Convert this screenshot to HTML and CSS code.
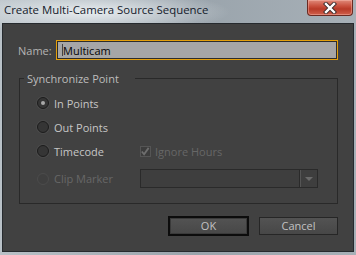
FILE: index.html
```html
<!DOCTYPE html>
<html>
<head>
<meta charset="utf-8">
<link rel="stylesheet" href="styles.css">
</head>
<body>
<div class="window">
  <div class="titlebar">
    <span class="title">Create Multi-Camera Source Sequence</span>
    <button class="close" aria-label="Close">
      <svg width="18" height="12" viewBox="0 0 18 12">
        <path d="M5 2 L13 10 M13 2 L5 10" stroke="#3a2a2a" stroke-width="4.2" stroke-linecap="square"/>
        <path d="M5 2 L13 10 M13 2 L5 10" stroke="#ffffff" stroke-width="2.4" stroke-linecap="square"/>
      </svg>
    </button>
  </div>
  <div class="content">
    <div class="name-row">
      <label class="name-label">Name:</label>
      <div class="name-input"><span class="caret"></span>Multicam</div>
    </div>
    <fieldset class="group">
      <legend>Synchronize Point</legend>
      <div class="grid">
        <div class="opt"><span class="radio checked"></span>In Points</div>
        <div></div>
        <div class="opt"><span class="radio"></span>Out Points</div>
        <div></div>
        <div class="opt"><span class="radio"></span>Timecode</div>
        <div class="opt disabled"><span class="check">
          <svg width="11" height="11" viewBox="0 0 11 11"><path d="M2 5.5 L4.5 8.5 L9.5 1.5" fill="none" stroke="#6e6e6e" stroke-width="2"/></svg>
        </span>Ignore Hours</div>
        <div class="opt disabled last"><span class="radio dis"></span>Clip Marker</div>
        <div class="select last"><span class="sel-body"></span><span class="sel-arrow"></span></div>
      </div>
    </fieldset>
    <div class="buttons">
      <button class="btn default">OK</button>
      <button class="btn">Cancel</button>
    </div>
  </div>
</div>
</body>
</html>
```
FILE: styles.css
```css
html, body {
  margin: 0;
  padding: 0;
  width: 356px;
  height: 255px;
  overflow: hidden;
  background: #a4adb4;
}
.window {
  width: 356px;
  height: 255px;
  box-sizing: border-box;
  padding: 0 2px 3px 2px;
  display: flex;
  flex-direction: column;
  background:
    radial-gradient(ellipse 140px 22px at 90px 12px, rgba(235,240,243,0.95), rgba(235,240,243,0) 100%),
    linear-gradient(90deg, #b9c1c7 0%, #9aa4ac 55%, #a7b0b7 100%);
  font-family: "Open Sans", "Noto Sans", sans-serif;
}
.titlebar {
  height: 23px;
  display: flex;
  align-items: flex-start;
  justify-content: space-between;
  flex: none;
}
.title {
  margin: 2px 0 0 2px;
  font-family: "Open Sans", sans-serif;
  font-size: 11.4px;
  color: #141a2a;
  line-height: 16px;
}
.close {
  width: 46px;
  height: 16px;
  margin: 0 1px 0 0;
  padding: 0;
  border: 1px solid #6a2a22;
  border-top: none;
  border-radius: 0 0 4px 4px;
  background: linear-gradient(180deg, #e08a7a 0%, #c9503e 40%, #b83a28 60%, #d0604c 100%);
  display: flex;
  align-items: center;
  justify-content: center;
  box-shadow: inset 0 0 0 1px rgba(255,200,190,0.4);
}
.close svg { display: block; }
.content {
  flex: 1;
  background: #414141;
  border: 1px solid #262a2e;
  display: flex;
  flex-direction: column;
  font-size: 11px;
  color: #c4c4c4;
}
.name-row {
  display: flex;
  align-items: center;
  margin: 16px 15px 0 15px;
  height: 20px;
}
.name-label {
  width: 38px;
  color: #b4b4b4;
}
.name-input {
  flex: 1;
  height: 20px;
  box-sizing: border-box;
  border: 1px solid #e4a00c;
  box-shadow: inset 0 0 0 1px #2c2c2c;
  background: #a6a6a6;
  color: #050505;
  display: flex;
  align-items: center;
  padding-left: 5px;
}
.caret {
  width: 1px;
  height: 12px;
  background: #444;
}
.group {
  margin: 11px 15px 0 16px;
  padding: 0 0 16px 0;
  border: 1px solid #292929;
  min-width: 0;
}
.group legend {
  margin-left: 4px;
  padding: 0 16px 0 3px;
  color: #bdbdbd;
  line-height: 15px;
}
.grid {
  display: grid;
  grid-template-columns: 103px 178px;
  grid-auto-rows: 24px;
  align-items: center;
  padding: 5px 0 0 17px;
}
.opt {
  display: flex;
  align-items: center;
  color: #c6c6c6;
}
.opt.disabled { color: #676767; }
.opt.last, .select.last { margin-top: 6px; height: 19px; }
.grid > .last { align-self: start; }
.radio {
  width: 10px;
  height: 10px;
  border-radius: 50%;
  border: 1px solid #1c1c1c;
  background: #353535;
  box-shadow: 0 0 0 1px #4a4a4a;
  margin-right: 5px;
  display: flex;
  align-items: center;
  justify-content: center;
}
.radio.checked::after {
  content: "";
  width: 4px;
  height: 4px;
  border-radius: 50%;
  background: #a8a8a8;
}
.radio.dis {
  border-color: #4c4c4c;
  background: #3f3f3f;
  box-shadow: none;
}
.check {
  width: 11px;
  height: 11px;
  box-sizing: border-box;
  border: 1px solid #555;
  background: #3c3c3c;
  margin-right: 4px;
  display: flex;
}
.check svg { display: block; margin: -1px 0 0 -1px; }
.select {
  display: flex;
  box-sizing: border-box;
  border: 1px solid #2a2a2a;
  background: #3e3e3e;
}
.sel-body { flex: 1; border-right: 1px solid #2a2a2a; box-shadow: 1px 0 0 #555; }
.sel-arrow {
  width: 17px;
  display: flex;
  align-items: center;
  justify-content: center;
}
.sel-arrow::after {
  content: "";
  border-left: 4px solid transparent;
  border-right: 4px solid transparent;
  border-top: 4px solid #6a6a6a;
}
.buttons {
  display: flex;
  justify-content: flex-end;
  gap: 10px;
  margin: 12px 15px 0 0;
  align-items: center;
}
.btn {
  width: 79px;
  height: 18px;
  padding: 0;
  border: 1px solid #262626;
  background: linear-gradient(180deg, #535353, #474747);
  color: #c2c2c2;
  font-family: "Open Sans", sans-serif;
  font-size: 11px;
  line-height: 16px;
  box-sizing: border-box;
}
.btn.default {
  width: 81px;
  height: 20px;
  border: 2px solid #0c0c0c;
  box-shadow: inset 0 0 0 1px #3a3a3a;
}
```
